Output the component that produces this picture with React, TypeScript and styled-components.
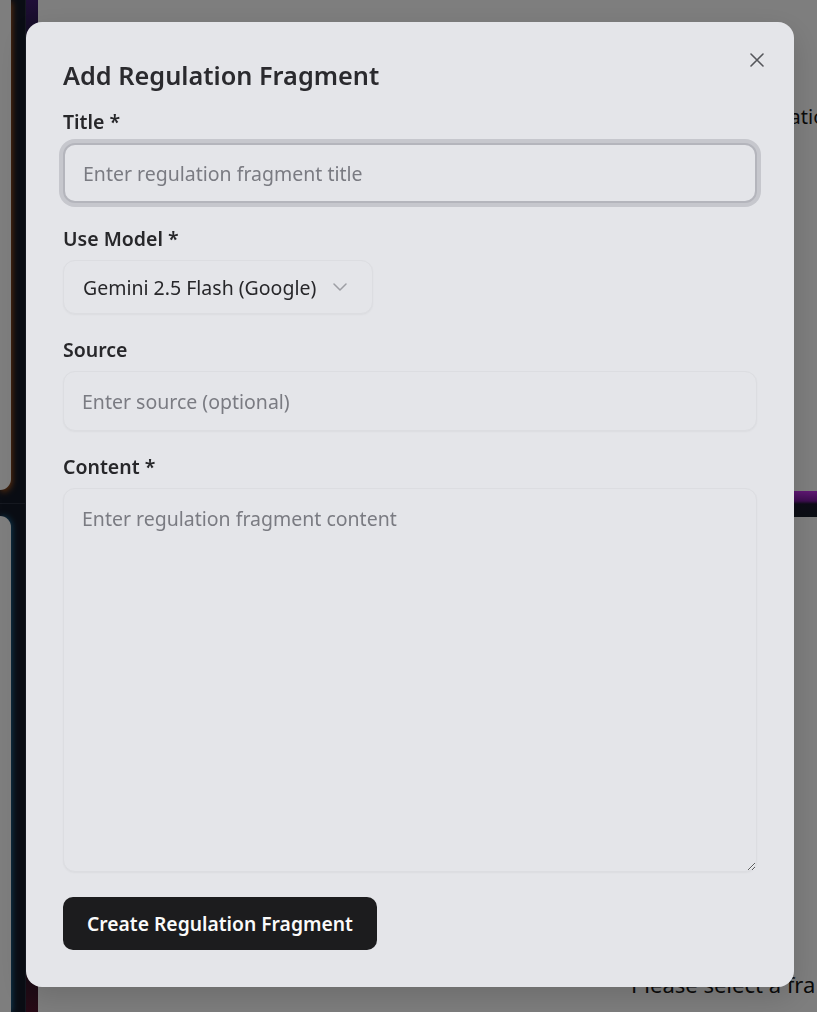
import styled, { createGlobalStyle } from "styled-components";

const GlobalStyle = createGlobalStyle`
  html, body {
    margin: 0;
    padding: 0;
    overflow: hidden;
  }
  body {
    font-family: "Noto Sans", "Open Sans", sans-serif;
    background: #141a28;
  }
  * {
    box-sizing: border-box;
  }
`;

const App = () => {
  return (
    <>
      <GlobalStyle />
      <Page>
        <LeftPanel>
          <TopCard />
          <CardDivider />
          <BottomCard />
        </LeftPanel>
        <Gutter />
        <MainPanel>
          <TopPane>
            <PaneHeading>Regulation</PaneHeading>
          </TopPane>
          <Band />
          <BottomPane>
            <EmptyText>Please select a fra</EmptyText>
          </BottomPane>
        </MainPanel>
      </Page>

      <Overlay>
        <Dialog role="dialog" aria-labelledby="dialog-title">
          <CloseButton aria-label="Close">
            <svg width="14" height="14" viewBox="0 0 14 14" fill="none">
              <path d="M1 1L13 13M13 1L1 13" stroke="#55565b" strokeWidth="1.6" strokeLinecap="round" />
            </svg>
          </CloseButton>

          <Heading id="dialog-title">Add Regulation Fragment</Heading>

          <Form onSubmit={(e) => e.preventDefault()}>
            <Field>
              <Label htmlFor="title">Title *</Label>
              <TextInput id="title" $focused autoFocus placeholder="Enter regulation fragment title" />
            </Field>

            <Field>
              <Label>Use Model *</Label>
              <SelectTrigger type="button">
                <span>Gemini 2.5 Flash (Google)</span>
                <svg width="14" height="8" viewBox="0 0 14 8" fill="none">
                  <path d="M1 1L7 7L13 1" stroke="#9d9ea4" strokeWidth="1.5" strokeLinecap="round" strokeLinejoin="round" />
                </svg>
              </SelectTrigger>
            </Field>

            <Field>
              <Label htmlFor="source">Source</Label>
              <TextInput id="source" placeholder="Enter source (optional)" />
            </Field>

            <Field>
              <Label htmlFor="content">Content *</Label>
              <TextArea id="content" placeholder="Enter regulation fragment content" />
            </Field>

            <SubmitButton type="submit">Create Regulation Fragment</SubmitButton>
          </Form>
        </Dialog>
      </Overlay>
    </>
  );
};

export default App;

// background app (dimmed by the overlay)

const Page = styled.div`
  display: flex;
  height: 100vh;
  background: #141a28;
`;

const LeftPanel = styled.div`
  width: 26px;
  display: flex;
  flex-direction: column;
  padding-right: 14px;
  border-right: 1px solid #2c3242;
`;

const TopCard = styled.div`
  height: 490px;
  background: #fdfdfd;
  border-bottom-right-radius: 12px;
  box-shadow: 1px 2px 6px rgba(230, 110, 20, 0.8);
`;

const CardDivider = styled.div`
  height: 14px;
  margin-right: -14px;
  border-bottom: 1px solid #2c3242;
`;

const BottomCard = styled.div`
  flex: 1;
  margin-top: 12px;
  background: #fdfdfd;
  border-top-right-radius: 12px;
  box-shadow: 1px 0 6px rgba(30, 140, 200, 0.8);
`;

const Gutter = styled.div`
  width: 12px;
  background: linear-gradient(
    to bottom,
    #401c70 0px,
    #141a28 60px,
    #141a28 940px,
    #50142c 100%
  );
`;

const MainPanel = styled.div`
  flex: 1;
  display: flex;
  flex-direction: column;
  min-width: 0;
`;

const TopPane = styled.div`
  height: 491px;
  background: #fdfdfd;
  padding: 103px 0 0 698px;
  white-space: nowrap;
  overflow: hidden;
`;

const PaneHeading = styled.div`
  font-size: 20px;
  color: #161616;
`;

const Band = styled.div`
  height: 26px;
  background: linear-gradient(to bottom, #c030e8 0px, #7a1aa0 10px, #1c1830 13px, #161c28 100%);
`;

const BottomPane = styled.div`
  flex: 1;
  background: #fdfdfd;
  display: flex;
  align-items: flex-end;
  padding: 0 0 13px 593px;
  white-space: nowrap;
  overflow: hidden;
`;

const EmptyText = styled.div`
  font-size: 22px;
  color: #161616;
`;

// modal

const Overlay = styled.div`
  position: fixed;
  inset: 0;
  background: rgba(0, 0, 0, 0.5);
  display: flex;
  align-items: flex-start;
  padding: 22px 0 0 26px;
`;

const Dialog = styled.div`
  position: relative;
  width: 768px;
  padding: 37px;
  border-radius: 16px;
  background: #e4e5e9;
  box-shadow: 0 10px 30px rgba(0, 0, 0, 0.15);
  color: #27272a;
`;

const CloseButton = styled.button`
  position: absolute;
  top: 30px;
  right: 29px;
  width: 16px;
  height: 16px;
  padding: 0;
  border: none;
  background: transparent;
  display: flex;
  align-items: center;
  justify-content: center;
  cursor: pointer;
`;

const Heading = styled.h2`
  margin: 0;
  font-size: 25.3px;
  line-height: 32px;
  font-weight: 600;
  color: #2a2a2e;
`;

const Form = styled.form`
  margin-top: 19px;
  display: flex;
  flex-direction: column;
  gap: 24px;
`;

const Field = styled.div`
  display: flex;
  flex-direction: column;
  align-items: flex-start;
  gap: 9px;
`;

const Label = styled.label`
  font-size: 19.5px;
  line-height: 24px;
  font-weight: 600;
  color: #27272a;
`;

const TextInput = styled.input<{ $focused?: boolean }>`
  width: 100%;
  height: 60px;
  padding: 0 18px;
  border-radius: 12px;
  font-family: inherit;
  font-size: 19.5px;
  color: #27272a;
  background: #e4e5e9;
  outline: none;
  caret-color: #111;
  border: ${(p) => (p.$focused ? "2px solid #b4b5bc" : "1px solid #dcdde1")};
  box-shadow: ${(p) =>
    p.$focused ? "0 0 0 4px #c6c7cd" : "0 1px 2px rgba(0, 0, 0, 0.04)"};

  &::placeholder {
    color: #7a7b82;
  }
`;

const SelectTrigger = styled.button`
  height: 54px;
  display: inline-flex;
  align-items: center;
  gap: 17px;
  padding: 0 25px 0 19px;
  border-radius: 12px;
  border: 1px solid #dcdde1;
  background: #e4e5e9;
  box-shadow: 0 1px 2px rgba(0, 0, 0, 0.04);
  font-family: inherit;
  font-size: 19.5px;
  color: #27272a;
  cursor: pointer;
`;

const TextArea = styled.textarea`
  width: 100%;
  height: 384px;
  padding: 16px 18px;
  border-radius: 12px;
  border: 1px solid #dcdde1;
  background: #e4e5e9;
  box-shadow: 0 1px 2px rgba(0, 0, 0, 0.04);
  font-family: inherit;
  font-size: 19.5px;
  line-height: 28px;
  color: #27272a;
  outline: none;
  resize: vertical;

  &::placeholder {
    color: #7a7b82;
  }
`;

const SubmitButton = styled.button`
  align-self: flex-start;
  height: 53px;
  margin-top: 1px;
  padding: 0 24px;
  border: none;
  border-radius: 10px;
  background: #1c1c1e;
  color: #fafafa;
  font-family: inherit;
  font-size: 19.3px;
  font-weight: 600;
  cursor: pointer;
`;
